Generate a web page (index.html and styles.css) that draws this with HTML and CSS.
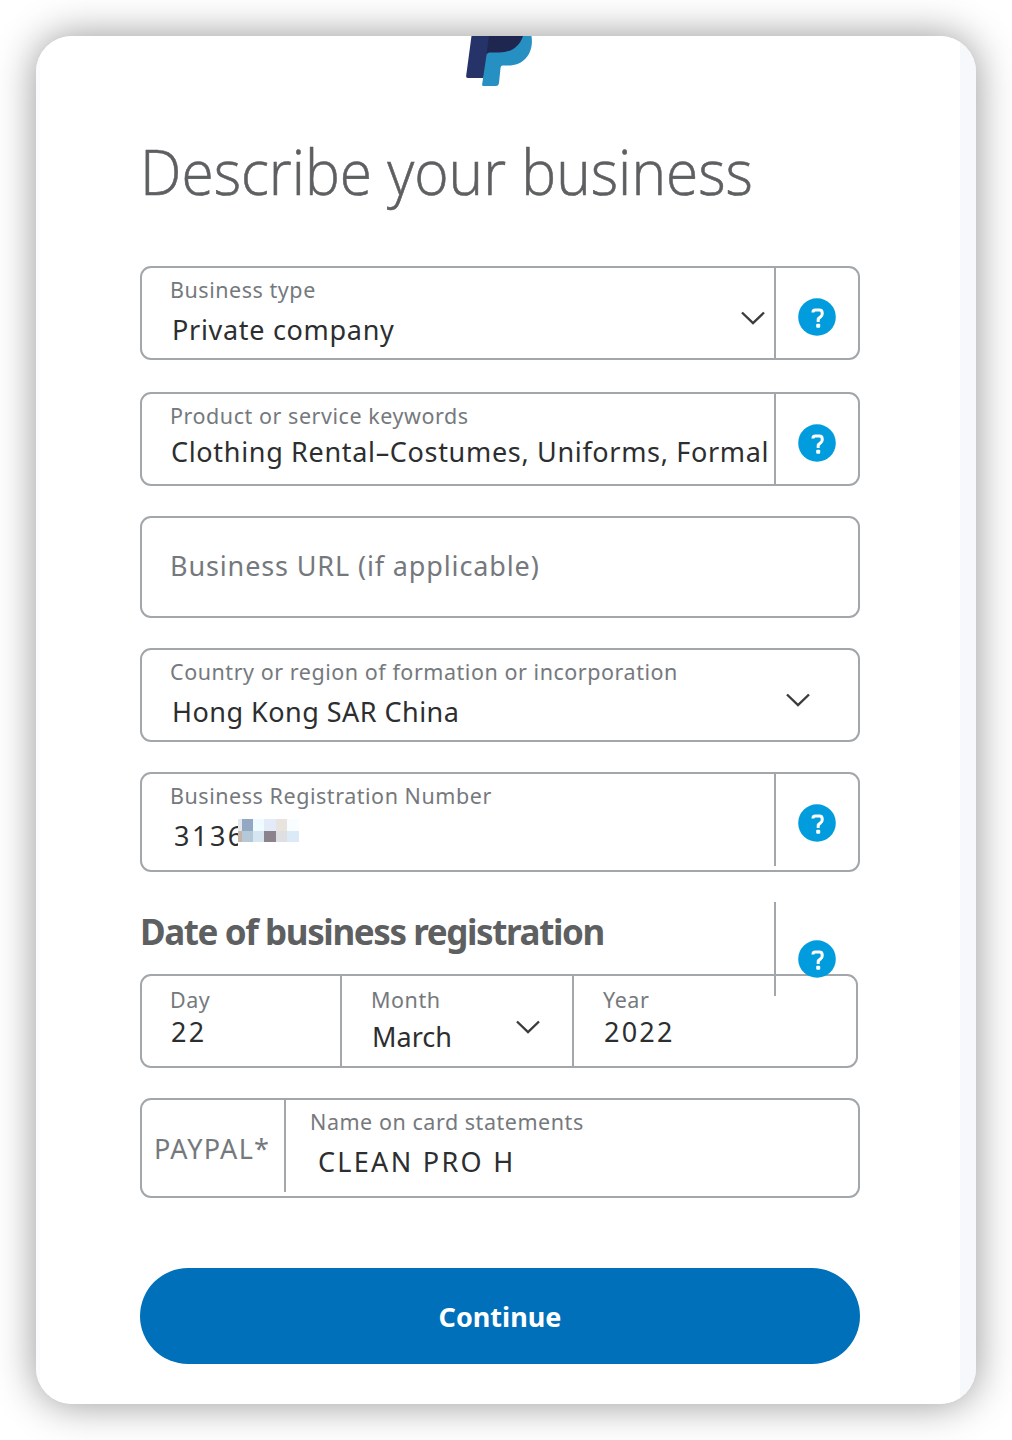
FILE: index.html
```html
<!DOCTYPE html>
<html lang="en">
<head>
<meta charset="utf-8">
<title>Describe your business</title>
<link rel="stylesheet" href="styles.css">
</head>
<body>
<svg class="defs" width="0" height="0" aria-hidden="true">
  <symbol id="chevron" viewBox="0 0 26 16"><path d="M2 2.5 L13 13 L24 2.5" fill="none" stroke="#3a3c3e" stroke-width="2.4"/></symbol>
  <symbol id="help" viewBox="0 0 38 38"><circle cx="19" cy="19" r="18.8" fill="#009cde"/><path d="M15 14.600 V13.800 Q15.200 12 17.200 12 H21.300 Q24.200 12 24.200 14.800 V16 Q24.200 17.800 22.500 18.900 Q20.200 20.300 20.200 22 V24" fill="none" stroke="#fff" stroke-width="3"/><rect x="18.200" y="25.700" width="4" height="4" rx="1" fill="#fff"/></symbol>
</svg>
<main class="card">
  <svg class="logo" width="68" height="51" viewBox="0 0 68 51">
    <path d="M7.500 0 H27 L23 28 L19.500 42 H4 Q1.800 42 2.200 39.500 Z" fill="#253368"/>
    <path d="M58 0 H67.500 C70 16 61 29.500 44 29.500 H38.500 Q37 29.500 36.600 31.500 L35 47 Q34.500 50 32 50 H19.500 Q17.800 50 18.200 48 L22.500 19 Q23 16 26 16 Z" fill="#2790c3"/>
    <path d="M25 0 H59 C55 12 46 16.500 35 16.500 H26 Q23 16.500 22.500 19 Z" fill="#1f264f"/>
  </svg>
  <h1 class="title"><span class="title-text">Describe your business</span></h1>
  <form class="form">
    <div class="field">
      <div class="body"><span class="label">Business type</span><span class="value v1">Private company</span></div>
      <svg class="chev" width="26" height="16"><use href="#chevron"/></svg>
      <div class="help"><svg width="38" height="38"><use href="#help"/></svg></div>
    </div>
    <div class="field keywords">
      <div class="body"><span class="label">Product or service keywords</span><span class="value v2">Clothing Rental–Costumes, Uniforms, Formal</span></div>
      <div class="help"><svg width="38" height="38"><use href="#help"/></svg></div>
    </div>
    <div class="field url"><span class="placeholder">Business URL (if applicable)</span></div>
    <div class="field country">
      <div class="body"><span class="label">Country or region of formation or incorporation</span><span class="value v3">Hong Kong SAR China</span></div>
      <svg class="chev" width="26" height="16"><use href="#chevron"/></svg>
    </div>
    <div class="field number">
      <div class="body"><span class="label">Business Registration Number</span>
        <span class="value v4"><span class="digits">3136</span><svg class="mosaic" width="61" height="24" viewBox="0 0 61 24">
          <path fill="#e5e8ea" d="M0 0h4v12H0z"/><path fill="#c3b3a9" d="M0 12h4v11H0z"/>
          <path fill="#94a8c4" d="M4 0h11v12H4z"/><path fill="#b4c8d8" d="M4 12h11v11H4z"/>
          <path fill="#effcff" d="M15 0h11v12H15z"/><path fill="#d6e5ef" d="M15 12h11v11H15z"/>
          <path fill="#e2ebf7" d="M26 0h12v12H26z"/><path fill="#8b828c" d="M26 12h12v11H26z"/>
          <path fill="#e8e3df" d="M38 0h11v12H38z"/><path fill="#dedfe1" d="M38 12h11v11H38z"/>
          <path fill="#fafdff" d="M49 0h12v12H49z"/><path fill="#dceaf8" d="M49 12h12v11H49z"/>
        </svg></span></div>
      <div class="help"><svg width="38" height="38"><use href="#help"/></svg></div>
    </div>
    <section class="date">
      <h2 class="subtitle">Date of business registration</h2>
      <div class="date-row">
        <div class="part day"><span class="label">Day</span><span class="value">22</span></div>
        <div class="part month"><span class="label">Month</span><span class="value">March</span><svg class="chev-month" width="26" height="16"><use href="#chevron"/></svg></div>
        <div class="part year"><span class="label">Year</span><span class="value">2022</span></div>
      </div>
      <div class="help date-help"><svg width="38" height="38"><use href="#help"/></svg></div>
    </section>
    <div class="field statement">
      <div class="prefix"><span>PAYPAL*</span></div>
      <div class="body"><span class="label">Name on card statements</span><span class="value v5">CLEAN PRO H</span></div>
    </div>
    <button class="continue" type="button">Continue</button>
  </form>
</main>
</body>
</html>
```
FILE: styles.css
```css
* { box-sizing: border-box; }
body { margin: 0; padding: 36px; background: #fff; font-family: "Noto Sans", "Open Sans", sans-serif; color: #2c2e2f; }
.defs { display: block; position: absolute; }
.card { width: 940px; height: 1368px; border-radius: 36px; padding: 0 0 0 104px; overflow: hidden; background: linear-gradient(to right, #fafbfe 4px, #fff 4px, #fff 924px, #f6f8fb 924px); box-shadow: 0 0 40px rgba(0, 0, 0, .42); }
.logo { display: block; margin-left: 324px; }
.title { margin: 46px 0 0; height: 97px; font-weight: 300; font-size: 62px; line-height: 76px; color: #5d5f61; white-space: nowrap; }
.title-text { display: inline-block; font-family: "Open Sans", sans-serif; transform: scaleX(.946); transform-origin: left; -webkit-text-stroke: .6px #5d5f61; }
.form { width: 720px; margin-top: 36px; display: flex; flex-direction: column; }
.field { display: flex; height: 94px; border: 2px solid #a1a7ab; border-radius: 11px; margin-bottom: 32px; }
.body { flex: 1; min-width: 0; padding: 7px 0 0 28px; display: flex; flex-direction: column; white-space: nowrap; }
.label { font-size: 21.500px; line-height: 30px; letter-spacing: .540px; color: #75797d; }
.value { font-size: 27px; line-height: 36px; margin-top: 7px; margin-left: 2px; }
.v1 { letter-spacing: .7px; }
.help { width: 84px; border-left: 2px solid #a1a7ab; padding: 30px 0 0 22px; }
.help svg, .chev { display: block; }
.chev { margin: 42px 8px 0 0; }
.keywords { margin-bottom: 30px; }
.v2 { margin-top: 3px; margin-left: 1px; letter-spacing: .670px; }
.url { height: 102px; margin-bottom: 30px; align-items: center; padding: 0 0 4px 28px; }
.placeholder { font-size: 27px; color: #75797d; letter-spacing: .870px; }
.country { margin-bottom: 30px; }
.country .chev { margin-right: 47px; }
.v3 { letter-spacing: .470px; }
.number { height: 100px; margin-bottom: 0; }
.number .help { height: 92px; }
.v4 { display: flex; margin-left: 4px; }
.digits { width: 64px; overflow: hidden; letter-spacing: 2.500px; }
.mosaic { margin-top: 1px; }
.date { position: relative; height: 226px; padding-top: 40px; }
.subtitle { margin: 0; font-size: 35px; line-height: 40px; height: 62px; letter-spacing: -1.400px; color: #5d5f61; font-weight: 700; white-space: nowrap; }
.date-row { display: grid; grid-template-columns: 200px 232px 1fr; width: 718px; height: 94px; border: 2px solid #a1a7ab; border-radius: 11px; }
.part { position: relative; display: flex; flex-direction: column; padding: 9px 0 0 29px; border-right: 2px solid #a1a7ab; }
.day { padding-left: 28px; }
.part .value { margin-top: -1px; margin-left: 1px; letter-spacing: 2.200px; }
.month .value { margin-top: 4px; letter-spacing: 0; }
.part.year { border-right: 0; }
.chev-month { position: absolute; left: 173px; top: 43px; }
.date-help { position: absolute; left: 634px; top: 30px; height: 94px; padding-top: 38px; padding-left: 22px; }
.statement { height: 100px; margin-bottom: 70px; }
.prefix { width: 144px; height: 92px; border-right: 2px solid #a1a7ab; padding: 30px 0 0 12px; font-size: 27px; line-height: 38px; letter-spacing: 1.300px; color: #75797d; }
.statement .body { padding-left: 24px; }
.v5 { margin-left: 8px; letter-spacing: 2.300px; }
.continue { height: 96px; border: 0; border-radius: 48px; background: #0070ba; color: #fff; font: 700 27px/36px "Noto Sans", sans-serif; padding: 2px 0 0; }
```
